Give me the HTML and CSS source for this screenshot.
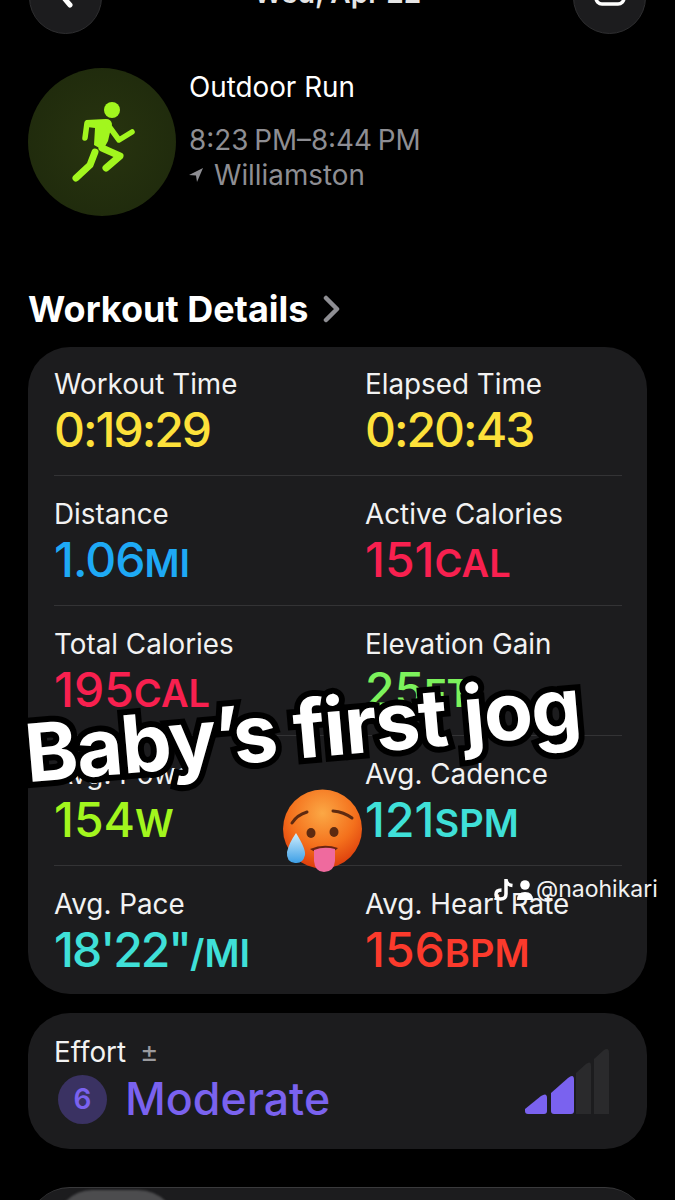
FILE: index.html
```html
<!DOCTYPE html>
<html lang="en">
<head>
    <meta charset="UTF-8">
    <meta name="viewport" content="width=device-width, initial-scale=1.0">
    <title>Outdoor Run</title>
    <link rel="stylesheet" href="styles.css">
</head>
<body>
    <div class="page">
        <div class="topbar">
            <div class="round-btn">
                <svg class="back-icon" width="40" height="40" viewBox="0 0 40 40"><path d="M24 4 L12 18 L24 32" /></svg>
            </div>
            <div class="top-title">Wed, Apr 22</div>
            <div class="round-btn">
                <svg class="share-icon" width="40" height="40" viewBox="0 0 40 40"><rect x="6" y="6" width="28" height="25" rx="6" /></svg>
            </div>
        </div>

        <div class="summary">
            <div class="run-circle">
                <svg width="90" height="95" viewBox="-3 0 90 95">
                    <circle cx="52" cy="15" r="8" fill="#a2f61e" />
                    <path d="M26 25 L46 24 Q51 24 52 29 L48 46 L43 55 L34 50 L35 33 L27 32 Z" fill="#a2f61e" />
                    <path class="run-limb" d="M27 28 L25 43" />
                    <path class="run-limb" d="M48 30 L59 45 L72 37" />
                    <path class="run-limb wide" d="M42 53 L60 61 L46 73" />
                    <path class="run-limb wide" d="M35 57 L30 70 L16 83" />
                </svg>
            </div>
            <div class="summary-text">
                <div class="run-name">Outdoor Run</div>
                <div class="run-time">8:23 PM–8:44 PM</div>
                <div class="run-place">
                    <svg width="14" height="16" viewBox="0 0 14 16"><path d="M14 1 L0 8 L7 8.5 L8 15 Z" fill="#8e8e93" /></svg>
                    <span>Williamston</span>
                </div>
            </div>
        </div>

        <h2 class="section-title">Workout Details
            <svg width="18" height="28" viewBox="0 0 18 28"><path d="M3 3 L14 14 L3 25" /></svg>
        </h2>

        <div class="card details">
            <div class="row">
                <div class="stat"><div class="label">Workout Time</div><div class="value yellow time">0:19:29</div></div>
                <div class="stat"><div class="label">Elapsed Time</div><div class="value yellow time">0:20:43</div></div>
            </div>
            <div class="row">
                <div class="stat"><div class="label">Distance</div><div class="value blue decimal">1.06<span class="unit">MI</span></div></div>
                <div class="stat"><div class="label">Active Calories</div><div class="value pink">151<span class="unit">CAL</span></div></div>
            </div>
            <div class="row">
                <div class="stat"><div class="label">Total Calories</div><div class="value pink">195<span class="unit">CAL</span></div></div>
                <div class="stat"><div class="label">Elevation Gain</div><div class="value green">25<span class="unit">FT</span></div></div>
            </div>
            <div class="row">
                <div class="stat"><div class="label">Avg. Power</div><div class="value lime">154<span class="unit">W</span></div></div>
                <div class="stat"><div class="label">Avg. Cadence</div><div class="value cyan">121<span class="unit">SPM</span></div></div>
            </div>
            <div class="row">
                <div class="stat"><div class="label">Avg. Pace</div><div class="value cyan pace">18'22"<span class="unit">/MI</span></div></div>
                <div class="stat"><div class="label">Avg. Heart Rate</div><div class="value red">156<span class="unit">BPM</span></div></div>
            </div>
        </div>

        <div class="card effort">
            <div class="effort-left">
                <div class="label">Effort <span class="plusminus">±</span></div>
                <div class="effort-main">
                    <span class="effort-num">6</span>
                    <span class="effort-word">Moderate</span>
                </div>
            </div>
            <svg class="effort-bars" width="84" height="65" viewBox="0 0 84 65">
                <path d="M0 62 L0 60 L16 47 Q22 43 22 49 L22 62 Q22 65 19 65 L3 65 Q0 65 0 62 Z" fill="#7a62ef" />
                <path d="M26 62 L26 44 L43 29 Q49 24 49 31 L49 62 Q49 65 46 65 L29 65 Q26 65 26 62 Z" fill="#7a62ef" />
                <path d="M51 65 L51 24 L61 15 Q66 11 66 17 L66 65 Z" fill="#2a2a2c" />
                <path d="M69 65 L69 10 L79 1 Q84 -2 84 4 L84 65 Z" fill="#2a2a2c" />
            </svg>
        </div>

        <div class="card map-card">
            <div class="map-thumb"></div>
        </div>

        <div class="caption">Baby’s first jog</div>

        <svg class="emoji" width="80" height="84" viewBox="0 0 80 84">
            <defs>
                <radialGradient id="faceFill" cx="50%" cy="30%" r="70%">
                    <stop offset="0" stop-color="#fba845" />
                    <stop offset="0.6" stop-color="#f4701c" />
                    <stop offset="1" stop-color="#dd3d0c" />
                </radialGradient>
                <linearGradient id="dropFill" x1="0" y1="0" x2="0" y2="1">
                    <stop offset="0" stop-color="#cfeefd" />
                    <stop offset="1" stop-color="#3d9fe6" />
                </linearGradient>
            </defs>
            <circle cx="40.500" cy="40" r="39.500" fill="url(#faceFill)" />
            <path class="brow" d="M10 34 Q15 26 25 23" />
            <path class="brow" d="M51 22 Q62 23 70 29" />
            <ellipse cx="29" cy="44" rx="4.500" ry="5" fill="#5e2a10" />
            <ellipse cx="52" cy="43" rx="4.500" ry="5" fill="#5e2a10" />
            <path d="M28 60 Q42 54 56 59 Q52 64 42 64 Q33 64 28 60 Z" fill="#6b2412" />
            <path d="M32 61 Q42 57 53 60 L53 72 Q52 83 42 83 Q33 83 32 72 Z" fill="#ef6a9e" />
            <path d="M14 44 Q24 60 23 66 Q21 75 13 74 Q4 73 5 63 Q7 54 14 44 Z" fill="url(#dropFill)" />
        </svg>

        <div class="watermark">
            <svg width="20" height="23" viewBox="0 0 20 23"><path d="M12 1 L12 16 Q12 21 6.500 21 Q2 21 2 16.500 Q2 12 7.500 12 M12 2 Q13 7 18.500 7.500" /></svg>
            <svg width="18" height="21" viewBox="0 0 18 21"><circle cx="9" cy="6" r="4.800" fill="#fff" /><path d="M1 21 Q1 13 9 13 Q17 13 17 21 Z" fill="#fff" /></svg>
            <span>@naohikari</span>
        </div>
    </div>
</body>
</html>
```

FILE: styles.css
```css
* {
    box-sizing: border-box;
}

html, body {
    margin: 0;
    padding: 0;
    background-color: #000;
}

body {
    font-family: Inter, "Liberation Sans", sans-serif;
    color: #fff;
}

.page {
    position: relative;
    width: 675px;
    height: 1200px;
    overflow: hidden;
}

/* top bar, cut off by the top of the picture */
.topbar {
    display: flex;
    justify-content: space-between;
    align-items: flex-end;
    height: 34px;
    padding: 0 29px;
}

.round-btn {
    flex: none;
    width: 73px;
    height: 73px;
    border-radius: 50%;
    background-color: #1c1c1e;
    border: 1px solid #2e2e30;
    display: flex;
    align-items: flex-end;
    justify-content: center;
    padding-bottom: 20px;
}

.back-icon path {
    fill: none;
    stroke: #fff;
    stroke-width: 5;
    stroke-linecap: round;
    stroke-linejoin: round;
}

.share-icon rect {
    fill: none;
    stroke: #fff;
    stroke-width: 3.500;
}

.top-title {
    font-size: 28px;
    font-weight: 600;
    line-height: 26px;
    margin-bottom: 28px;
    color: #e5e5e5;
}

.summary {
    display: flex;
    margin-top: 34px;
    padding-left: 28px;
    gap: 13px;
}

.run-circle {
    flex: none;
    width: 148px;
    height: 148px;
    border-radius: 50%;
    background-color: #26330f;
    background-image: radial-gradient(circle at 50% 50%, #28340f, #1d280c);
    display: flex;
    align-items: center;
    justify-content: center;
}

.run-limb {
    fill: none;
    stroke: #a2f61e;
    stroke-width: 5.500;
    stroke-linecap: round;
    stroke-linejoin: round;
}

.run-limb.wide {
    stroke-width: 7;
}

.summary-text {
    font-size: 27.800px;
    padding-top: 2px;
}

.run-name {
    line-height: 34px;
}

.run-time {
    margin-top: 18px;
    line-height: 36px;
    color: #8e8e93;
    word-spacing: -2px;
}

.run-place {
    display: flex;
    align-items: center;
    gap: 11px;
    margin-top: -1px;
    line-height: 36px;
    color: #8e8e93;
}

.section-title {
    display: flex;
    align-items: center;
    gap: 14px;
    margin: 71px 0 0 28px;
    font-size: 36px;
    font-weight: 700;
    line-height: 44px;
}

.section-title svg path {
    fill: none;
    stroke: #8e8e93;
    stroke-width: 4.500;
    stroke-linecap: round;
    stroke-linejoin: round;
}

.card {
    margin: 0 28px;
    background-color: #1c1c1e;
    border-radius: 42px;
}

.details {
    margin-top: 16px;
    height: 647px;
    padding: 0 25px 0 26px;
}

.row {
    display: grid;
    grid-template-columns: 311px 1fr;
    height: 130px;
    padding-top: 20px;
    border-bottom: 1px solid #333335;
}

.row:first-child {
    height: 129px;
    padding-top: 19px;
}

.row:last-child {
    border-bottom: none;
}

.label {
    font-size: 27.800px;
    line-height: 36px;
    color: #f2f2f2;
}

.value {
    font-size: 48px;
    font-weight: 500;
    line-height: 56px;
}

.value.time {
    letter-spacing: -2px;
}

.value.decimal {
    letter-spacing: -1px;
}

.value.pace {
    letter-spacing: -2px;
}

.unit {
    font-size: 38px;
    font-weight: 600;
    letter-spacing: 0;
}

.yellow { color: #fde13a; }
.blue { color: #1ea9f5; }
.pink { color: #f8204f; }
.green { color: #7cf25c; }
.lime { color: #a2f61e; }
.cyan { color: #3fe0d8; }
.red { color: #fb3a2c; }

.effort {
    display: flex;
    justify-content: space-between;
    margin-top: 19px;
    height: 136px;
    padding: 21px 38px 0 26px;
}

.plusminus {
    font-size: 28px;
    color: #9a9a9e;
    margin-left: 6px;
}

.effort-main {
    display: flex;
    align-items: center;
    gap: 18px;
    margin-top: 2px;
    padding-left: 4px;
}

.effort-num {
    width: 49px;
    height: 49px;
    border-radius: 50%;
    background-color: #3a3262;
    color: #7a62ef;
    font-size: 28px;
    font-weight: 600;
    display: flex;
    align-items: center;
    justify-content: center;
}

.effort-word {
    font-size: 44.700px;
    font-weight: 500;
    color: #7a62ef;
}

.effort-bars {
    margin-top: 15px;
}

.map-card {
    margin-top: 38px;
    height: 120px;
    border-top: 1px solid #3a3a3c;
    padding: 2px 24px 0 28px;
}

.map-thumb {
    width: 122px;
    height: 60px;
    border-radius: 36px 40px 0 0;
    background-color: #4c4c4e;
    filter: blur(1px);
}

/* overlays sitting on top of the screenshot */
.caption {
    position: absolute;
    left: 24px;
    top: 684px;
    font-size: 80px;
    font-weight: 700;
    letter-spacing: -1.500px;
    line-height: 90px;
    white-space: nowrap;
    color: #fff;
    -webkit-text-stroke: 12px #000;
    paint-order: stroke fill;
    transform: rotate(-5deg);
}

.emoji {
    position: absolute;
    left: 282px;
    top: 789px;
}

.brow {
    fill: none;
    stroke: #5e2a10;
    stroke-width: 3;
    stroke-linecap: round;
}

.watermark {
    position: absolute;
    left: 494px;
    top: 875px;
    display: flex;
    align-items: center;
    gap: 2px;
    font-size: 23px;
    color: #f2f2f2;
}

.watermark svg path {
    fill: none;
    stroke: #fff;
    stroke-width: 3.500;
}

.watermark svg:last-of-type path {
    fill: #fff;
    stroke: none;
}
```
